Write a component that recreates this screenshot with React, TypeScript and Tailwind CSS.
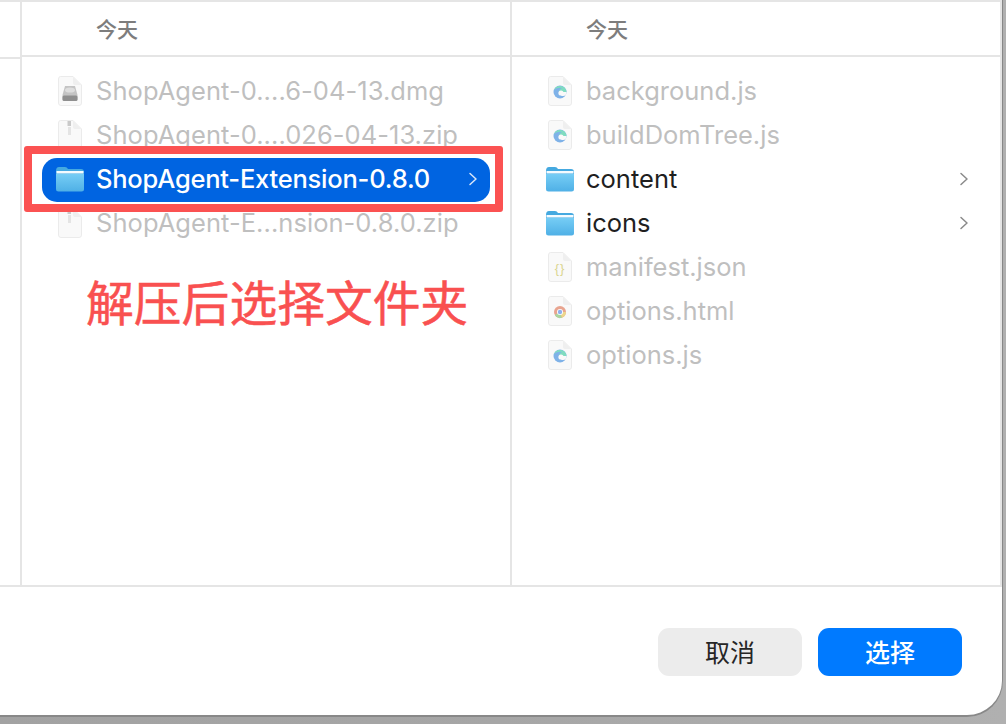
import React from "react";

const FONT = "font-['Inter','Noto_Sans_CJK_SC',sans-serif]";

function Folder() {
  return (
    <svg width="30" height="26" viewBox="0 0 30 26" className="shrink-0">
      <defs>
        <linearGradient id="fg" x1="0" y1="0" x2="0" y2="1">
          <stop offset="0" stopColor="#76cdf5" />
          <stop offset="1" stopColor="#4fb0e6" />
        </linearGradient>
      </defs>
      <path d="M1 5 Q1 1 4 1 H10 Q12 1 13 3 H26 Q29 3 29 6 V10 H1 Z" fill="#45a9e0" />
      <rect x="1.5" y="5" width="27" height="2.5" fill="#f4fbff" />
      <path d="M1 8 H29 V23 Q29 25.5 26.5 25.5 H3.5 Q1 25.5 1 23 Z" fill="url(#fg)" />
    </svg>
  );
}

function Sheet({ children }: { children?: React.ReactNode }) {
  return (
    <svg width="24" height="30" viewBox="0 0 24 30" className="shrink-0">
      <path d="M2.5 .5 H15 L23.5 9 V27 Q23.5 29.5 21 29.5 H3 Q.5 29.5 .5 27 V3 Q.5 .5 2.5 .5 Z" fill="#f9f9f9" stroke="#ebebeb" />
      <path d="M15 .5 V7 Q15 9 17 9 H23.5 Z" fill="#efefef" />
      {children}
    </svg>
  );
}

const Dmg = () => (
  <Sheet>
    <path d="M7 10 H17 L19.5 19 V23 Q19.5 25 17.5 25 H6.5 Q4.5 25 4.5 23 V19 Z" fill="#c4c4c4" />
    <rect x="4.5" y="19.5" width="15" height="5.5" rx="1.5" fill="#8f8f8f" />
    <ellipse cx="12" cy="14" rx="5" ry="2.6" fill="#dedede" />
  </Sheet>
);
const Zip = () => (
  <Sheet>
    <rect x="9.5" y="1" width="3.5" height="5" fill="#c9c9c9" />
    <path d="M10 8 h3 M10 10 h3 M10 12 h3 M10 14 h3" stroke="#cfcfcf" strokeWidth="1" />
  </Sheet>
);
const Edge = () => (
  <Sheet>
    <circle cx="12" cy="16" r="6.5" fill="#7fb2e8" />
    <path d="M6 14 A6.5 6.5 0 0 1 18.5 16 H11 Q11 13 14 12 Q9 11 6 14 Z" fill="#7fdcc0" />
    <circle cx="13" cy="17" r="2.6" fill="#f9f9f9" />
    <path d="M13 19.5 Q16 21 18 18.5 L18.5 16 H14 Z" fill="#f9f9f9" />
  </Sheet>
);
const Json = () => (
  <Sheet>
    <text x="12" y="20.5" textAnchor="middle" fontSize="13" letterSpacing="1" fill="#d9d58f" fontFamily="'Liberation Sans',sans-serif">{"{}"}</text>
  </Sheet>
);
const Chrome = () => (
  <Sheet>
    <circle cx="12" cy="16" r="6" fill="#e8a48f" />
    <path d="M12 16 L6.8 19 A6 6 0 0 0 14 21.7 Z" fill="#a8d6a0" />
    <path d="M12 16 L18 16 A6 6 0 0 1 14 21.7 Z" fill="#ecd68c" />
    <circle cx="12" cy="16" r="3" fill="#fff" />
    <circle cx="12" cy="16" r="2.2" fill="#8fb1ee" />
  </Sheet>
);

function Chevron({ color }: { color: string }) {
  return (
    <svg width="10" height="14" viewBox="0 0 10 14" className="shrink-0">
      <path d="M2 1.5 L8 7 L2 12.5" fill="none" stroke={color} strokeWidth="1.5" strokeLinecap="round" strokeLinejoin="round" />
    </svg>
  );
}

function Row({
  icon,
  label,
  dim,
  chevron,
  tight,
}: {
  icon: React.ReactNode;
  label: string;
  dim?: boolean;
  chevron?: boolean;
  tight?: boolean;
}) {
  return (
    <div className="flex h-11 items-center">
      <div className="flex w-[74px] shrink-0 pr-[11px] pl-[33px]">
        <div className="flex w-[30px] justify-center">{icon}</div>
      </div>
      <span className={`flex-1 text-[25.5px] leading-none whitespace-nowrap ${dim ? "text-[#bfbfbf]" : "text-[#1f1f1f]"} ${tight ? "tracking-[0.05px]" : ""}`}>{label}</span>
      {chevron && (
        <span className="pr-[31px]">
          <Chevron color="#8a8a8a" />
        </span>
      )}
    </div>
  );
}

function ColumnHeader() {
  return (
    <div className="flex h-[55px] items-center border-b-2 border-[#e5e5e5] pt-[2px] pl-[74px] text-[21px] font-medium text-[#7d7d7d]">今天</div>
  );
}

export default function App() {
  return (
    <div className={`h-[724px] w-[1006px] overflow-hidden bg-linear-to-r from-[#a2a2a2] via-[#a6a6a6] to-[#b0b0b0] ${FONT}`}>
      <div className="flex h-[717px] w-[1003px] flex-col rounded-br-[36px] border-r border-b-2 border-[#888888] bg-white">
        <div className="flex h-[587px] shrink-0 border-t-2 border-b-2 border-[#e5e5e5]">
          <div className="w-[22px] shrink-0 border-r-2 border-[#e5e5e5]">
            <div className="mt-[55px] h-[2px] bg-[#e5e5e5]" />
          </div>
          <div className="w-[490px] shrink-0 border-r-2 border-[#e5e5e5]">
            <ColumnHeader />
            <div className="pt-[12px]">
              <Row icon={<Dmg />} label="ShopAgent-0....6-04-13.dmg" dim tight />
              <Row icon={<Zip />} label="ShopAgent-0....026-04-13.zip" dim tight />
              <div className="mx-[20px] mt-px -mb-px flex h-11 items-center rounded-[15px] bg-[#0064e1]">
                <div className="flex w-[54px] shrink-0 -translate-y-px pr-[11px] pl-[13px]">
                  <Folder />
                </div>
                <span className="flex-1 -translate-y-px text-[25.5px] leading-none font-medium tracking-[-0.22px] whitespace-nowrap text-white">ShopAgent-Extension-0.8.0</span>
                <span className="-translate-y-px pr-[12px]">
                  <Chevron color="#d7e6fa" />
                </span>
              </div>
              <Row icon={<Zip />} label="ShopAgent-E...nsion-0.8.0.zip" dim tight />
            </div>
          </div>
          <div className="flex-1 border-r-2 border-[#e5e5e5]">
            <ColumnHeader />
            <div className="pt-[12px]">
              <Row icon={<Edge />} label="background.js" dim />
              <Row icon={<Edge />} label="buildDomTree.js" dim />
              <Row icon={<Folder />} label="content" chevron />
              <Row icon={<Folder />} label="icons" chevron />
              <Row icon={<Json />} label="manifest.json" dim />
              <Row icon={<Chrome />} label="options.html" dim />
              <Row icon={<Edge />} label="options.js" dim />
            </div>
          </div>
        </div>
        <div className="flex flex-1 items-start justify-end gap-4 pt-[41px] pr-[40px]">
          <button className="flex h-12 w-36 items-center justify-center rounded-[11px] bg-[#ececec] pt-[3px] text-[25px] text-[#262626]">取消</button>
          <button className="flex h-12 w-36 items-center justify-center rounded-[11px] bg-[#007aff] pt-[3px] text-[25px] font-medium text-white">选择</button>
        </div>
      </div>
      <div className="absolute top-[146px] left-[24px] h-[66px] w-[479px] rounded-[3px] border-[8px] border-[#fb5252]" />
      <div className="absolute top-[281px] left-[86px] text-[47.8px] leading-none whitespace-nowrap text-[#f95050] [-webkit-text-stroke:0.5px_#f95050]">解压后选择文件夹</div>
    </div>
  );
}
